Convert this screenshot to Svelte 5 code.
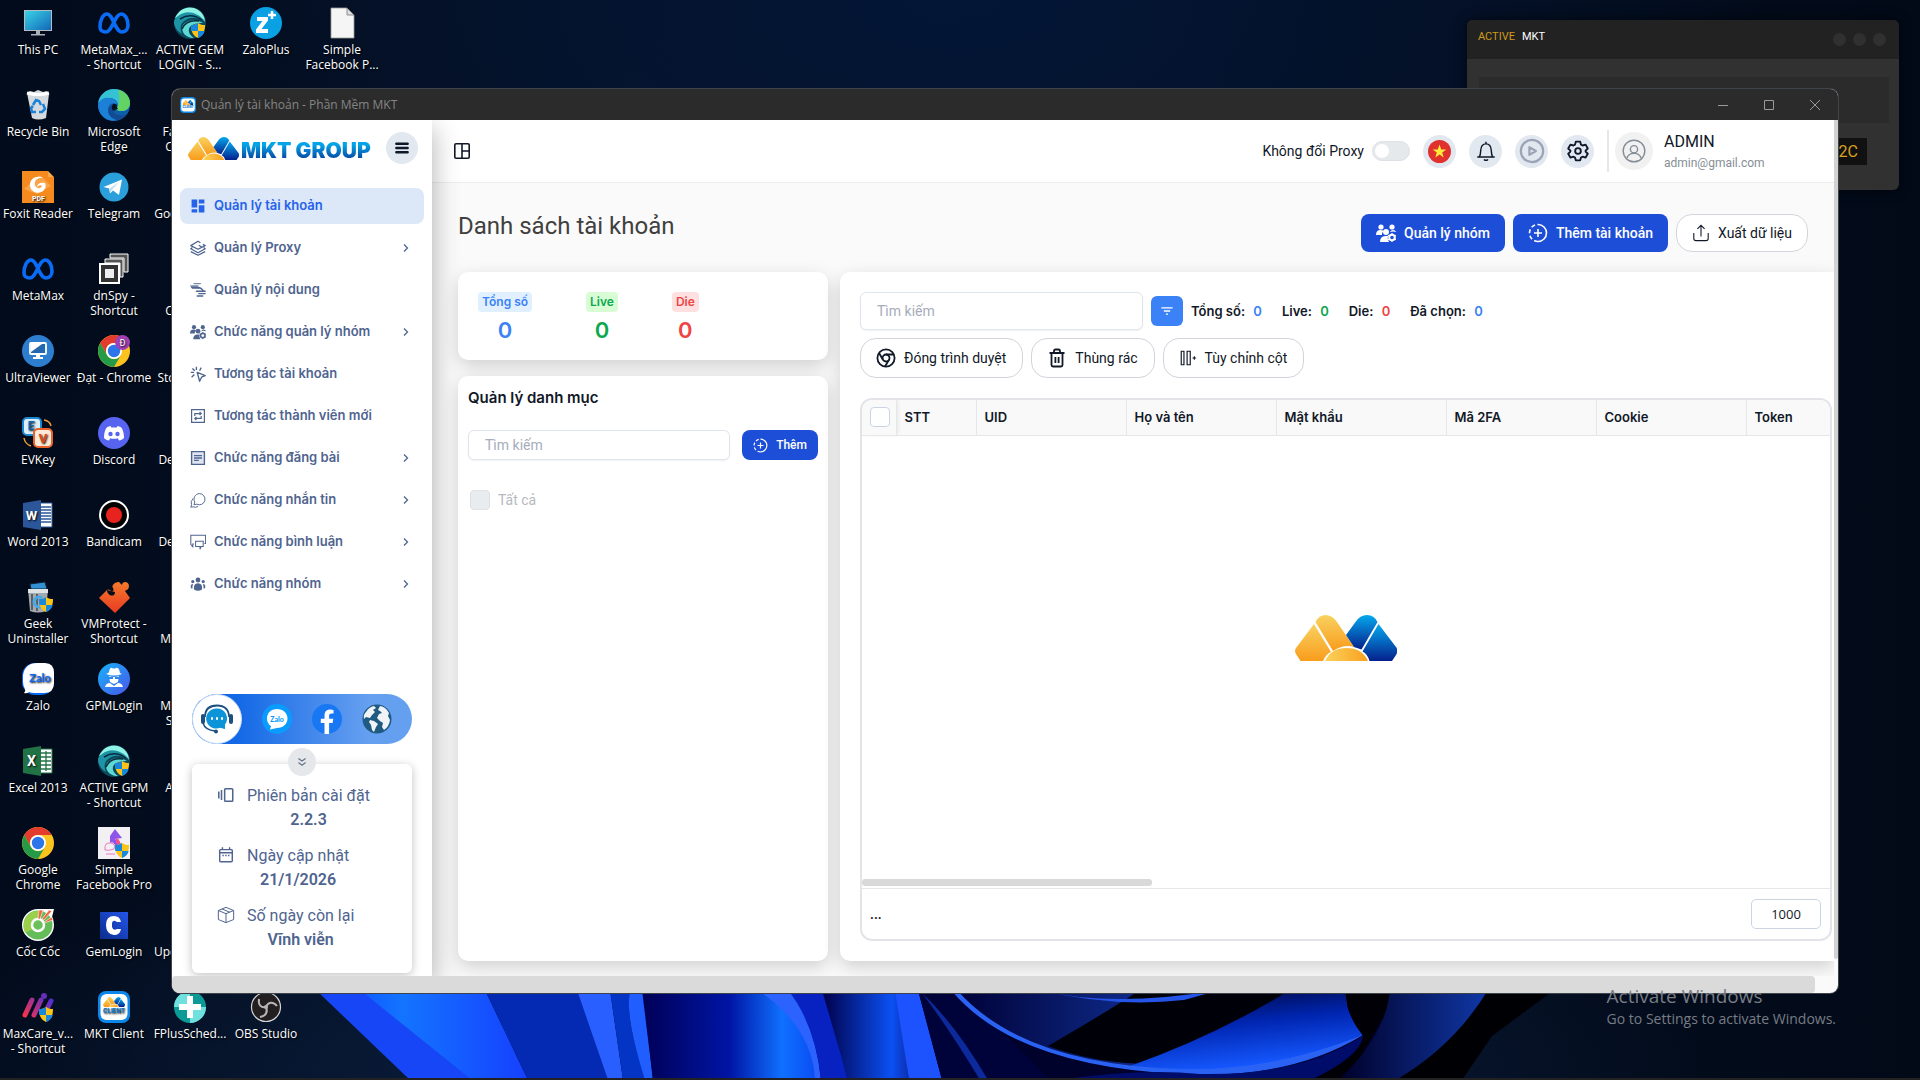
<script lang="ts">
  interface Shortcut {
    icon: string;
    lines: string[];
    tucked?: boolean;
  }

  interface MenuItem {
    icon: string;
    label: string;
    expandable?: boolean;
  }

  const shield =
    '<path d="M24 16c2.500 1.700 4.800 2 7 2 0 6-1.500 10.500-7 13-5.500-2.500-7-7-7-13 2.200 0 4.500-.3 7-2z" fill="#fdc316"/><path d="M24 16v8h-6.700c-.3-1.800-.3-3.900-.3-6 2.200 0 4.500-.3 7-2zM24 24h6.700c-.8 3.300-2.900 5.600-6.700 7z" fill="#1788dc"/>';

  const metaLoop =
    '<path d="M2 20C2 13 5 7 9 7c6 0 8 18 15 18 4 0 6-3 6-7 0-6-3-11-7-11-6 0-9 18-15 18-4 0-6-2-6-5z" fill="none" stroke="#0a6cf5" stroke-width="3.600"/>';

  const wave =
    '<circle cx="16" cy="16" r="16" fill="#0b4a5c"/><path d="M1 11C5 2 13-1 20 1c7 2 11 8 11 14C27 8 17 6 1 11z" fill="#8ff3e6"/><path d="M4 9C12 3 22 4 31 14c-9-5-17-4-22 1-3 3-3 8-1 12C3 24 0 19 0 15c0-2 1-4 4-6z" fill="#1f93a6"/><path d="M9 18c5-6 13-6 20-2-8 0-13 2-14 6s2 7 5 9c-8 0-14-6-11-13z" fill="#5fd8d4"/><path d="M6 12c8-5 15-4 22 1M8 22c3-7 9-9 17-8" fill="none" stroke="#052b3c" stroke-width="1.500"/>';

  const chrome =
    '<circle cx="16" cy="16" r="16" fill="#fcc31e"/><path d="M2.200 8A16 16 0 0 1 29.800 8H16a8 8 0 0 0-7 12z" fill="#e33b2e"/><path d="M2.200 8A16 16 0 0 0 16 32l7-12a8 8 0 0 1-14 0z" fill="#259b48"/><circle cx="16" cy="16" r="8" fill="#fff"/><circle cx="16" cy="16" r="6.200" fill="#2c76ea"/>';

  const desktopIcons: Record<string, string> = {
    none: '',
    pc: '<rect x="2" y="3" width="28" height="21" fill="#b5bcc2"/><rect x="3" y="4" width="26" height="19" fill="url(#g-screen)"/><path d="M14 24h4v3h5v1.500H9V27h5z" fill="#a9b0b6"/>',
    meta: metaLoop,
    gem: wave + shield,
    zaloplus:
      '<circle cx="16" cy="16" r="16" fill="#0aa0e4"/><path d="M7 10h11v3.500L11.500 22H18v4H6v-3.500L12.500 14H7z" fill="#fff"/><path d="M22 4v8M18 8h8" stroke="#fff" stroke-width="2.500"/>',
    file: '<path d="M5 1h16l7 7v23H5z" fill="#f5f5f5" stroke="#9a9a9a" stroke-width=".8"/><path d="M21 1v7h7z" fill="#dedede" stroke="#777" stroke-width=".8"/>',
    recycle:
      '<path d="M5 4l3-2 4 1 4-2 5 2 4-1 2 3-3 24q-8 3-14 0z" fill="#d4dade"/><path d="M5 4q11 3 22 0" fill="none" stroke="#fff" stroke-width="3"/><path d="M11 16l3-5 3 1 2 4M21 15l2 5-3 3h-3M14 23h-4l-1-4 2-2" fill="none" stroke="#1a83d8" stroke-width="2.500"/>',
    edge: '<circle cx="16" cy="16" r="16" fill="#0f5eaa"/><path d="M0 15C1 6 8 0 16 0c9 0 16 6 16 14 0 5-4 8-8 8-4 0-6-1-5-3 2-3 1-9-7-10C7 9 2 11 0 15z" fill="#34c2d4"/><path d="M20 1c7 1 12 7 12 13 0 5-4 8-8 8-4 0-6-1-5-3 3-5 3-12 1-18z" fill="#63d363"/><path d="M0 16c1-5 6-8 11-7 5 0 9 4 9 8-2-3-7-4-9 0-3 6 1 12 8 14C9 34 0 26 0 16z" fill="#1b80d6"/><path d="M16 17c-4 6 3 12 13 8-3 4-7 6-10 6-8-2-11-9-7-14 1-1 3-1 4 0z" fill="#124b93"/><path d="M15 15q-3 5 1 7 1-2 4-2-2-2-1-4-2-2-4-1z" fill="#041022"/>',
    foxit:
      '<path d="M0 0h26v6h6v26H0z" fill="#f58b1e"/><path d="M26 0l6 6h-6z" fill="#f7a94d"/><path d="M2 18L18 4l11 11-14 8z" fill="#fbb565" opacity=".6"/><path d="M22 7C13 3 7 9 8 15c1 7 10 9 14 4 2-2 2-5 1-7-5-1-8 1-8 4 2-2 4-2 5-1-1 3-6 3-7-1-1-5 3-8 9-7z" fill="#fff"/><text x="16.500" y="30" font-size="7" font-weight="700" fill="#fff" text-anchor="middle" font-family="Roboto">PDF</text>',
    telegram:
      '<circle cx="16" cy="16" r="14.500" fill="#2a9fdb"/><path d="M5.500 16L24 8.500 21 24l-6-4.500-3 3-.8-5z" fill="#fff"/><path d="M11.500 17.500L21 11l-7 8-2 3z" fill="#c3dff0"/>',
    dnspy:
      '<path d="M12 1h18v18h-4V5H12zM7 6h18v18h-3V10H7z" fill="#555" stroke="#fff"/><path d="M2 11h19v19H2z" fill="#333" stroke="#fff" stroke-width="2"/><rect x="7" y="16" width="9" height="9" fill="#eee"/>',
    ultra:
      '<circle cx="16" cy="16" r="16" fill="#2e7ecf"/><rect x="8" y="8" width="16" height="11" rx="1" fill="#2567ae" stroke="#fff" stroke-width="1.800"/><path d="M9 17L20 9H9z" fill="#fff"/><path d="M14 20h4v2h3v2H11v-2h3z" fill="#fff"/>',
    chromeuser:
      chrome +
      '<circle cx="24.500" cy="7.500" r="7.500" fill="#a13fb4"/><text x="24.500" y="11" font-size="9" fill="#fff" text-anchor="middle" font-family="Roboto">Đ</text>',
    evkey:
      '<rect x="1" y="1" width="18" height="17" rx="4" fill="#dceffc" stroke="#1c87cf" stroke-width="2"/><text x="9" y="13" font-size="12" font-weight="700" fill="#1266b0" text-anchor="middle" font-family="Roboto">E</text><rect x="12" y="12" width="18" height="18" rx="4" fill="#ffe9d8" stroke="#e9622a" stroke-width="2"/><text x="21" y="26" font-size="13" font-weight="700" fill="#dd4a17" text-anchor="middle" font-family="Roboto">V</text><path d="M22 3q6 1 7 6M2 21q1 6 7 8" fill="none" stroke="#f09b32" stroke-width="1.500"/>',
    discord:
      '<circle cx="16" cy="16" r="16" fill="#5764ef"/><path d="M12.500 9C10 9.300 8.500 10.500 8 11.500 6.500 14.500 6 17.500 6 21c1.500 1.700 3.300 2.300 5 2.500l1.200-2.200q3.800 1 7.600 0L21 23.500c1.700-.2 3.500-.8 5-2.500 0-3.500-.5-6.500-2-9.500-.5-1-2-2.200-4.500-2.500l-.8 1.500h-5.400z" fill="#fff"/><circle cx="12.500" cy="17" r="2.200" fill="#5764ef"/><circle cx="19.500" cy="17" r="2.200" fill="#5764ef"/>',
    word: '<path d="M15 4h15v24H15z" fill="#fff" stroke="#2b579a"/><path d="M19 8h10M19 11h10M19 14h10M19 17h10M19 20h10M19 23h10" stroke="#2b579a" stroke-width="1.300"/><path d="M1 4l18-3v30L1 28z" fill="#2b579a"/><text x="9.500" y="21" font-size="13" font-weight="700" fill="#fff" text-anchor="middle" font-family="Roboto">W</text>',
    bandicam:
      '<circle cx="16" cy="16" r="14" fill="#000" stroke="#fff" stroke-width="2"/><circle cx="16" cy="16" r="8" fill="#e8221f"/>',
    geek: '<path d="M8 3l15-2 2 7H9z" fill="#3191d4" stroke="#123"/><path d="M6 8h20l-2 22q-8 3-16 0z" fill="#a4a9ad"/><path d="M6 8h20v4H6z" fill="#dfe2e4"/><path d="M10 13v16M15 13v17" stroke="#5d6165" stroke-width="2"/><path d="M20 17a5 5 0 1 0 0 8" fill="none" stroke="#48a9e8" stroke-width="3"/>' +
      shield,
    vmprotect:
      '<path d="M1 17l8-8c2-2 4 2 6 1 2-2-2-4 0-6 2-3 5-3 6-3l3 3c0-4 7-4 7 1 0 4-3 4-4 5l5 7-15 15z" fill="url(#g-puzzle)"/><path d="M9 9c0 6 8 8 8 2" fill="#040d1d"/>',
    zalo: '<rect width="32" height="32" rx="13" fill="#0868f5"/><path d="M15 0h8q9 0 9 10v10q0 10-10 10h-9q-4 0-6-1-2 2-5 1 2-2 1-4-2-3-2-7V12Q3 0 15 0z" fill="#fff"/><text x="18" y="19" font-size="11" font-weight="700" fill="#0868f5" text-anchor="middle" font-family="Lato">Zalo</text>',
    gpm: '<circle cx="16" cy="16" r="16" fill="url(#g-gpm)"/><path d="M8 11q3-1 3-2 1-5 3-4 2 1 4 0 3-1 4 5l2 1q-8 3-16 0zM11 13q5 2 10 0l-1 6-4 2-4-2zM7 24q1-4 5-4l4 3 4-3q4 0 5 4z" fill="#fff"/><path d="M11 14h4v2h-4zM17 14h4v2h-4z" fill="#2688f0"/>',
    excel:
      '<path d="M15 4h15v24H15z" fill="#fff" stroke="#217346"/><path d="M19 8h10M19 12h10M19 16h10M19 20h10M19 24h10M24 6v20" stroke="#217346" stroke-width="1.300"/><path d="M1 4l18-3v30L1 28z" fill="#217346"/><text x="9.500" y="21" font-size="14" font-weight="700" fill="#fff" text-anchor="middle" font-family="Roboto">X</text>',
    chrome,
    simple:
      '<rect width="32" height="32" fill="#f3f0f4"/><path d="M17 2l-5 7v7q3-2 4 1l6 4q1-6-5-9l7-1z" fill="#8f55e8"/><path d="M18 11q5 2 5 9l-5-4z" fill="#f2508d"/><path d="M7 23q-1-8 6-7 5 1 3 6-5 2-9 1zM8 27h9" fill="none" stroke="#ed79bf"/>' +
      shield,
    coccoc:
      '<path d="M16 0h16l-2 8q2 4 2 8a16 16 0 1 1-16-16z" fill="#fff"/><circle cx="16" cy="16" r="14.500" fill="#65bd59"/><path d="M3 10Q8 1 16 2v10l-5 8-8 4q-3-8 0-14z" fill="#9bd04c"/><circle cx="16" cy="16" r="6" fill="#6cc05c" stroke="#fff" stroke-width="2.500"/><path d="M17 1l-1 9h2l3-9zM27 1l-7 9 2 1 8-9zM30 8l-8 5v1l9-3z" fill="#f5613d" stroke="#fff" stroke-width=".6"/>',
    gemlogin:
      '<path d="M2 3h28v27H2z" fill="url(#g-gem)"/><path d="M23 13h-4q-4-3-5 1v4q1 4 5 2h4q-1 6-7 6-8-1-8-10 0-9 8-9 6 0 7 6z" fill="#fff"/>',
    maxcare:
      '<path d="M3 24L10 9M12 24l7-15M22 24l7-14" stroke="url(#g-max)" stroke-width="5" stroke-linecap="round"/><circle cx="22" cy="5" r="3" fill="#6230b8"/>' +
      shield,
    mktclient:
      '<rect width="32" height="32" rx="8" fill="#0d86ea"/><rect x="2.500" y="3" width="27" height="26" rx="6" fill="#fff"/><svg x="5" y="6" width="22" height="10" viewBox="0 0 102 46"><use href="#mkt-mark"/></svg><text x="16" y="22" font-size="6" font-weight="800" fill="#0874c7" text-anchor="middle" font-family="Inter">CLIENT</text>',
    fplus:
      '<circle cx="16" cy="16" r="16" fill="#0c9a97"/><path d="M16 0A16 16 0 0 0 0 16h16zM32 16a16 16 0 0 1-16 16V16z" fill="#6fe0dd"/><path d="M13 5h6v8h8v6h-8v8h-6v-8H5v-6h8z" fill="#fff"/>',
    obs: '<circle cx="16" cy="16" r="14.500" fill="#231f20" stroke="#d5d5d5" stroke-width="1.200"/><path d="M16 16c-5 1-8-2-7-8M16 16c2-5 7-6 11-1M16 16c2 5 0 9-6 10" fill="none" stroke="#b9b5b5" stroke-width="2"/><circle cx="16" cy="16" r="2" fill="#b9b5b5"/>',
    red: '<circle cx="16" cy="16" r="16" fill="#c8454b"/>',
  };

  const columns: Shortcut[][] = [
    [
      { icon: 'pc', lines: ['This PC'] },
      { icon: 'recycle', lines: ['Recycle Bin'] },
      { icon: 'foxit', lines: ['Foxit Reader'] },
      { icon: 'meta', lines: ['MetaMax'] },
      { icon: 'ultra', lines: ['UltraViewer'] },
      { icon: 'evkey', lines: ['EVKey'] },
      { icon: 'word', lines: ['Word 2013'] },
      { icon: 'geek', lines: ['Geek', 'Uninstaller'] },
      { icon: 'zalo', lines: ['Zalo'] },
      { icon: 'excel', lines: ['Excel 2013'] },
      { icon: 'chrome', lines: ['Google', 'Chrome'] },
      { icon: 'coccoc', lines: ['Cốc Cốc'] },
      { icon: 'maxcare', lines: ['MaxCare_v...', '- Shortcut'] },
    ],
    [
      { icon: 'meta', lines: ['MetaMax_...', '- Shortcut'] },
      { icon: 'edge', lines: ['Microsoft', 'Edge'] },
      { icon: 'telegram', lines: ['Telegram'] },
      { icon: 'dnspy', lines: ['dnSpy -', 'Shortcut'] },
      { icon: 'chromeuser', lines: ['Đạt - Chrome'] },
      { icon: 'discord', lines: ['Discord'] },
      { icon: 'bandicam', lines: ['Bandicam'] },
      { icon: 'vmprotect', lines: ['VMProtect -', 'Shortcut'] },
      { icon: 'gpm', lines: ['GPMLogin'] },
      { icon: 'gem', lines: ['ACTIVE GPM', '- Shortcut'] },
      { icon: 'simple', lines: ['Simple', 'Facebook Pro'] },
      { icon: 'gemlogin', lines: ['GemLogin'] },
      { icon: 'mktclient', lines: ['MKT Client'] },
    ],
    [
      { icon: 'gem', lines: ['ACTIVE GEM', 'LOGIN - S...'] },
      tucked('Fa', 'C'),
      tucked('Goog'),
      tucked('', 'C'),
      tucked('Stor'),
      tucked('Des'),
      tucked('Des'),
      tucked('', 'Ma'),
      tucked('Ma', 'S'),
      tucked('A'),
      tucked(),
      tucked('Upda'),
      { icon: 'fplus', lines: ['FPlusSched...'] },
    ],
    [{ icon: 'zaloplus', lines: ['ZaloPlus'] }, ...blanks(11), { icon: 'obs', lines: ['OBS Studio'] }],
    [{ icon: 'file', lines: ['Simple', 'Facebook P...'] }, { icon: 'red', lines: [] }],
  ];

  // shortcuts half hidden under the app window
  function tucked(...lines: string[]): Shortcut {
    return { icon: 'none', lines, tucked: true };
  }

  function blanks(count: number): Shortcut[] {
    return Array.from({ length: count }, () => ({ icon: 'none', lines: [] }));
  }

  const people =
    '<circle cx="5" cy="4" r="2.600"/><circle cx="16" cy="4" r="2.600"/><path d="M0 12q0-5 4.500-5 2 0 3 1-2 2-1.500 4zM14 9q1-2 3-2 2.500 0 3 2-3-1-6 0z"/><circle cx="10" cy="9" r="3"/><path d="M4 19q0-6 5.500-6H12q-1 3 1 6z"/><circle cx="16" cy="14.500" r="2.800" fill="none" stroke="currentColor" stroke-width="2"/><path d="M16 10v9M11.900 12.200l8.200 4.600M11.900 16.800l8.200-4.600" stroke="currentColor" stroke-width="1.200" stroke-dasharray="1.600 5.900"/>';

  const icons: Record<string, string> = {
    dashboard: '<path d="M2 2h7v10H2zM11 2h7v5h-7zM2 14h7v4H2zM11 9h7v9h-7z"/>',
    layers:
      '<g fill="none" stroke="currentColor" stroke-width="1.600" stroke-linejoin="round"><path d="M13 3.500l-3-2L1 7l9 4.500 5-2.500-4-2.500M10 11.500L19 7l-3-1.500"/><path d="M3 9.500l-2 1.500 9 5 9-5-2-1.500M1 14.500l9 4.500 9-4.500"/></g>',
    strokes:
      '<path d="M5 2h8M1 5h9M3 8h8" stroke="currentColor" stroke-width="1.700" stroke-linecap="round" opacity=".75"/><path d="M2 6.500h6q6 0 9 5M8 11.500h11M11 14.500h8M9 17.500h7" fill="none" stroke="currentColor" stroke-width="1.700" stroke-linecap="round"/>',
    people,
    click:
      '<g fill="none" stroke="currentColor" stroke-width="1.700" stroke-linejoin="round"><path d="M9 8l10 4-4.500 2L12 19z"/><path d="M8 1v4M1 8h4M3 3l3 3M14 2l-2 4M2 14l3.500-3.500"/></g>',
    retweet:
      '<g fill="none" stroke="currentColor" stroke-width="1.500"><path d="M2 2h16v16H2z"/><path d="M6 10V7h8M12 5l2 2-2 2M14 10v3H6M8 11l-2 2 2 2"/></g>',
    post: '<path d="M2 2h16v16H2z" fill="#dfe4f0" stroke="currentColor" stroke-width="1.700"/><path d="M5 7h10M5 10h10M5 13h6" stroke="currentColor" stroke-width="1.700"/>',
    chat: '<g fill="none" stroke="currentColor" stroke-width="1.200"><path d="M11.500 2a7 7 0 1 1-3 13.200L5 16l1-3.500A7 7 0 0 1 11.500 2z"/><path d="M4 8q-4 4-2 8l-1 3 3-.5q3 1.500 6-.5"/></g>',
    comments:
      '<g fill="none" stroke="currentColor" stroke-width="1.300"><path d="M5 12.500H3.500V16L1 13V1.500h18.500V12H18"/><path d="M7 9h9.500v6.500H14L12.500 19v-3.500H7z"/></g>',
    group:
      '<circle cx="10" cy="5" r="3"/><circle cx="3.500" cy="7" r="2"/><circle cx="16.500" cy="7" r="2"/><path d="M5 17q-1-8 5-8t5 8q-5 3-10 0zM1 15v-3q0-2 3-2-1.500 3-1 6zM19 15v-3q0-2-3-2 1.500 3 1 6z"/>',
    chevron:
      '<path d="M6 3l7 7-7 7" fill="none" stroke="currentColor" stroke-width="2.600"/>',
    menu: '<path d="M2 4h16M2 10h16M2 16h16" stroke="currentColor" stroke-width="3.600" stroke-linecap="round"/>',
    panel:
      '<g fill="none" stroke="currentColor" stroke-width="2"><rect x="1" y="1" width="18" height="18" rx="1.500"/><path d="M10 1v18M10 10h9"/></g>',
    bell: '<path d="M2.500 15.500h15M4 15.500c1-2 1-3 1.200-6C5.400 6 7 3.500 10 3.500s4.600 2.500 4.800 6c.2 3 .2 4 1.200 6M10 3.500V2M8.500 18q1.500 1 3 0" fill="none" stroke="currentColor" stroke-width="1.300" stroke-linecap="round"/>',
    play: '<g fill="none" stroke="currentColor" stroke-width="1.700" stroke-linejoin="round"><circle cx="10" cy="10" r="8.600"/><path d="M8 7l5 3-5 3z"/></g>',
    gear: '<g fill="none" stroke="currentColor" stroke-width="1.700"><path d="M8 1.500h4l.7 2.700 1.500.8 2.700-.8 2 3.500-2 2v.8l2 2-2 3.500-2.700-.8-1.500.8-.7 2.500H8l-.7-2.500-1.500-.8-2.700.8-2-3.500 2-2v-.8l-2-2 2-3.500 2.700.8 1.500-.8z" stroke-linejoin="round"/><circle cx="10" cy="10" r="2.600"/></g>',
    user: '<g fill="none" stroke="currentColor" stroke-width="1.200"><circle cx="10" cy="10" r="9"/><circle cx="10" cy="8.500" r="3"/><path d="M4 16q1.500-4 6-4t6 4"/></g>',
    plus: '<path d="M10 6v8M6 10h8" stroke="currentColor" stroke-width="1.600"/><path d="M10 1.500a8.500 8.500 0 0 1 0 17" fill="none" stroke="currentColor" stroke-width="1.600"/><path d="M10 18.500a8.500 8.500 0 0 1 0-17" fill="none" stroke="currentColor" stroke-width="1.600" stroke-dasharray="4 2.500"/>',
    upload:
      '<path d="M2 10v6q0 2.500 2.500 2.500h11Q18 18.500 18 16v-6M10 14V2M6 5.500L10 1.500l4 4" fill="none" stroke="currentColor" stroke-width="1.200"/>',
    filter:
      '<path d="M2 5.500h16M5.500 10h9M8.500 14.500h3" stroke="currentColor" stroke-width="1.800"/>',
    browser:
      '<g fill="none" stroke="currentColor" stroke-width="1.800"><circle cx="10" cy="10" r="8.600"/><circle cx="10" cy="10" r="3.500"/><path d="M10 6.500h8M7 11.800L3 5M13 11.800L9 18.500"/></g>',
    trash:
      '<g fill="none" stroke="currentColor" stroke-width="1.800"><path d="M2.500 5h15M4.500 5v12q0 1.500 1.500 1.500h8q1.500 0 1.500-1.500V5M7 5V3q0-1.500 1.500-1.500h3Q13 1.500 13 3v2M8.400 9v6M11.600 9v6"/></g>',
    columns:
      '<path d="M2.500 2.500h3v15h-3zM9 2.500h3.500v15H9z" fill="none" stroke="currentColor" stroke-width="1.300"/><path d="M17 8v4M15 10h4" stroke="currentColor" stroke-width="1.300"/>',
    version:
      '<path d="M2 6v8M5 4.500v11" stroke="currentColor" stroke-width="1.700"/><rect x="8.500" y="3" width="9" height="14" rx="1" fill="none" stroke="currentColor" stroke-width="1.700"/>',
    calendar:
      '<g fill="none" stroke="currentColor" stroke-width="1.600"><rect x="3" y="4" width="14" height="13.500" rx="1"/><path d="M3 7.500h14M6 1.500V4M14 1.500V4"/><path d="M6 10.500h8" stroke-dasharray="1.600 1.500"/></g>',
    box: '<path d="M1.500 5L10 1.500 18.500 5v10L10 18.500 1.500 15zM1.500 5L10 8.500 18.500 5M10 8.500v10M5.500 3.300L14 6.800" fill="none" stroke="currentColor" stroke-width="1.100"/>',
    collapse:
      '<path d="M4 4l6 4.500L16 4M4 11l6 4.500 6-4.500" fill="none" stroke="currentColor" stroke-width="2"/>',
  };

  const menu: MenuItem[] = [
    { icon: 'dashboard', label: 'Quản lý tài khoản' },
    { icon: 'layers', label: 'Quản lý Proxy', expandable: true },
    { icon: 'strokes', label: 'Quản lý nội dung' },
    { icon: 'people', label: 'Chức năng quản lý nhóm', expandable: true },
    { icon: 'click', label: 'Tương tác tài khoản' },
    { icon: 'retweet', label: 'Tương tác thành viên mới' },
    { icon: 'post', label: 'Chức năng đăng bài', expandable: true },
    { icon: 'chat', label: 'Chức năng nhắn tin', expandable: true },
    { icon: 'comments', label: 'Chức năng bình luận', expandable: true },
    { icon: 'group', label: 'Chức năng nhóm', expandable: true },
  ];

  const info = [
    { icon: 'version', label: 'Phiên bản cài đặt', value: '2.2.3' },
    { icon: 'calendar', label: 'Ngày cập nhật', value: '21/1/2026' },
    { icon: 'box', label: 'Số ngày còn lại', value: 'Vĩnh viễn' },
  ];

  const stats = [
    { label: 'Tổng số', value: 0, tone: 'blue' },
    { label: 'Live', value: 0, tone: 'green' },
    { label: 'Die', value: 0, tone: 'red' },
  ];

  const counters = [...stats, { label: 'Đã chọn', value: 0, tone: 'blue' }];

  const headers = [
    { label: 'STT', width: 80 },
    { label: 'UID', width: 150 },
    { label: 'Họ và tên', width: 150 },
    { label: 'Mật khẩu', width: 170 },
    { label: 'Mã 2FA', width: 150 },
    { label: 'Cookie', width: 150 },
    { label: 'Token', width: 86 },
  ];

  let active = $state('Quản lý tài khoản');
  let categoryQuery = $state('');
  let accountQuery = $state('');
  let pageSize = $state('1000');
</script>

{#snippet icon(name: string, size: number)}
  <svg class="icon" width={size} height={size} viewBox="0 0 20 20" fill="currentColor" aria-hidden="true">
    {@html icons[name]}
  </svg>
{/snippet}

{#snippet mark(width: number, height: number)}
  <svg class="icon" {width} {height} viewBox="0 0 102 46" aria-hidden="true"><use href="#mkt-mark" /></svg>
{/snippet}

<svg class="defs" width="0" height="0" aria-hidden="true">
  <defs>
    <linearGradient id="g-screen" x1="0" y1="0" x2="1" y2="1"><stop stop-color="#39d3e6" /><stop offset="1" stop-color="#1267b8" /></linearGradient>
    <linearGradient id="g-puzzle" x1="0" y1="0" x2="0" y2="1"><stop stop-color="#f47a2c" /><stop offset="1" stop-color="#ea3a22" /></linearGradient>
    <linearGradient id="g-gpm" x1="0" y1="0" x2="1" y2="1"><stop stop-color="#16b4fb" /><stop offset="1" stop-color="#4a55e8" /></linearGradient>
    <linearGradient id="g-gem" x1="0" y1="1" x2="1" y2="0"><stop stop-color="#0b2d8e" /><stop offset="1" stop-color="#2456ea" /></linearGradient>
    <linearGradient id="g-max" gradientUnits="userSpaceOnUse" x1="2" y1="26" x2="28" y2="6"><stop stop-color="#ff3347" /><stop offset="1" stop-color="#4b2fd6" /></linearGradient>
    <linearGradient id="g-gold" x1="0" y1="0" x2="0" y2="1"><stop stop-color="#f8d260" /><stop offset="1" stop-color="#f99c1c" /></linearGradient>
    <linearGradient id="g-sun" x1="0" y1="0" x2="1" y2="0"><stop stop-color="#fbd25c" /><stop offset="1" stop-color="#f9a01f" /></linearGradient>
    <linearGradient id="g-blue" x1="0" y1="0" x2="0" y2="1"><stop stop-color="#04a9ee" /><stop offset="1" stop-color="#05208c" /></linearGradient>
    <g id="mkt-mark">
      <path d="M19 9L1 33q-2 3 0 6l4.500 7H28q3-7 8-9z" fill="url(#g-gold)" />
      <path d="M20.500 7Q24 0 30.500 0T42 7l17 25q-10-3-21 4z" fill="url(#g-gold)" />
      <path d="M51 20l9.500-13Q65 0 72 0t10.500 7L66.500 34.500 59 32z" fill="url(#g-blue)" />
      <path d="M83.500 9L101 32q3 4 0 8l-4 6H74.500q-2-7-7-9.500z" fill="url(#g-blue)" />
      <path d="M30 46q6-13 21.500-13T73 46z" fill="url(#g-sun)" />
    </g>
  </defs>
</svg>

<main class="desktop">
  <svg class="wallpaper" viewBox="0 0 1920 1080" preserveAspectRatio="none" aria-hidden="true">
    <defs>
      <linearGradient id="w1" x1="0" x2="1"><stop stop-color="#0b3fff" /><stop offset=".4" stop-color="#1374ff" /><stop offset="1" stop-color="#1640ff" /></linearGradient>
      <linearGradient id="w2" x1="0" x2="1"><stop stop-color="#000055" /><stop offset=".5" stop-color="#0015a5" /><stop offset=".8" stop-color="#0f70ff" /><stop offset="1" stop-color="#0a4cf2" /></linearGradient>
      <linearGradient id="w3" x1="0" x2="1"><stop stop-color="#000048" /><stop offset=".8" stop-color="#0b50f4" /><stop offset="1" stop-color="#0c2fb0" /></linearGradient>
      <linearGradient id="w4" x1="0" x2="1"><stop stop-color="#000238" /><stop offset=".55" stop-color="#12339c" /><stop offset="1" stop-color="#0a1f78" /></linearGradient>
      <linearGradient id="w5" x1="0" y1="0" x2=".3" y2="1"><stop stop-color="#000430" /><stop offset=".5" stop-color="#0025b0" /><stop offset="1" stop-color="#1558ff" /></linearGradient>
      <linearGradient id="w6" x1="0" x2="1"><stop stop-color="#000028" /><stop offset="1" stop-color="#1038a8" /></linearGradient>
    </defs>
    <path d="M485 990h1000l-87 90H528z" fill="#00022c" />
    <path d="M318 990h167l43 90H412z" fill="url(#w1)" />
    <path d="M316 990h44l112 90h-62z" fill="#1646f5" />
    <path d="M485 990h93l30 90h-80z" fill="#0429b2" />
    <path d="M577 990h33l13 90h-15z" fill="#2a5fff" />
    <path d="M610 990h22q-10 20 14 90h-23z" fill="#0434c4" />
    <path d="M631 990h12l10 90h-8q-22-70-14-90z" fill="#215eff" />
    <path d="M642 990h118q54 36 57 90H653z" fill="url(#w2)" />
    <path d="M758 990h32q26 36 31 90h-6q-2-52-57-90z" fill="#2c63ff" />
    <path d="M788 990h36l24 90h-27q-6-56-33-90z" fill="#0722c0" />
    <path d="M822 990h75l12 90h-61z" fill="url(#w3)" />
    <path d="M895 990h23l24 90h-33z" fill="#1d52ff" />
    <path d="M918 990h42l90 90H942z" fill="#00023a" />
    <path d="M922 993q34 32 66 87h-8q-30-50-58-87z" fill="#0d2a9c" />
    <path d="M957 990h393q-10 30 13 45-80 36-180 34-160-4-226-79z" fill="url(#w4)" />
    <path d="M1048 1046Q1110 1010 1140 990h190l-70 60q-120 30-212-4z" fill="#000008" />
    <path d="M1130 1066Q1215 1036 1290 990h55q0 24 18 45-60 30-120 35-60 4-113-4z" fill="url(#w5)" />
    <path d="M957 990q66 75 226 79 90 2 180-34-74 45-183 39-166-8-229-84z" fill="#2a62f4" />
    <path d="M1040 990q70 18 180 0l-36 10q-70 8-144-10z" fill="#2454e8" />
    <path d="M1060 1080q80-12 140-6 100 2 163-38 2 22-15 44z" fill="#000c6a" />
    <path d="M1345 990h54l-52 90h-36q50-24 52-44-16-20-18-46z" fill="#000006" />
    <path d="M1390 990h100q-36 56-92 90h-60q48-44 52-90z" fill="url(#w6)" />
    <path d="M1488 990h66l-62 46-30 44h-66q58-34 92-90z" fill="#000004" />
  </svg>

  <nav class="shortcuts" aria-label="Desktop">
    {#each columns as column}
      <div class="shortcut-column">
        {#each column as item}
          <div class="shortcut" class:tucked={item.tucked}>
            <svg width="32" height="32" viewBox="0 0 32 32" aria-hidden="true">{@html desktopIcons[item.icon]}</svg>
            {#each item.lines as line}
              <span>{line}</span>
            {/each}
          </div>
        {/each}
      </div>
    {/each}
  </nav>

  <section class="activator">
    <header>
      <strong>ACTIVE</strong>
      <span>MKT</span>
      <i></i><i></i><i></i>
    </header>
    <div class="activator-panel"></div>
    <div class="activator-code">2C</div>
  </section>

  <section class="app-window">
    <header class="titlebar">
      <svg width="16" height="16" viewBox="0 0 32 32" aria-hidden="true">{@html desktopIcons.mktclient}</svg>
      <span class="titlebar-text">Quản lý tài khoản - Phần Mềm MKT</span>
      <button aria-label="Minimize"><svg width="10" height="10"><path d="M0 5.500h10" /></svg></button>
      <button aria-label="Maximize"><svg width="10" height="10"><path d="M.5.5h9v9h-9z" /></svg></button>
      <button aria-label="Close"><svg width="10" height="10"><path d="M0 0l10 10M10 0L0 10" /></svg></button>
    </header>

    <div class="app-body">
      <aside class="sidebar">
        <div class="brand">
          {@render mark(51, 23)}
          <span class="brand-name">MKT GROUP</span>
          <button class="round burger" aria-label="Menu">{@render icon('menu', 14)}</button>
        </div>

        <nav class="menu">
          {#each menu as item}
            <button class="menu-item" class:active={item.label === active} onclick={() => (active = item.label)}>
              {@render icon(item.icon, 16)}
              <span>{item.label}</span>
              {#if item.expandable}
                {@render icon('chevron', 10)}
              {/if}
            </button>
          {/each}
        </nav>

        <div class="sidebar-foot">
          <div class="social">
            <a class="support" href="#support" aria-label="Hỗ trợ">
              <svg width="34" height="30" viewBox="0 0 34 30">
                <path d="M5 13C5 5 10 1.500 17 1.500S29 5 29 13" fill="none" stroke="#1d4f80" stroke-width="1.800" />
                <rect x="1" y="10" width="4" height="10" rx="2" fill="#1d4f80" /><rect x="29" y="10" width="4" height="10" rx="2" fill="#1d4f80" />
                <path d="M3 19q2 7 12 8" fill="none" stroke="#1d4f80" stroke-width="1.500" /><circle cx="16" cy="27.500" r="2" fill="#1d4f80" />
                <path d="M17 4.500a10 10 0 0 1 8 16V25l-5-1.300A10 10 0 1 1 17 4.500z" fill="#0c93d8" />
                <path d="M11 14.500h2M16 14.500h2M21 14.500h2" stroke="#fff" stroke-width="2.500" />
              </svg>
            </a>
            <a href="#zalo" aria-label="Zalo">
              <svg width="30" height="30" viewBox="0 0 30 30">
                <circle cx="15" cy="15" r="15" fill="#0a9bff" />
                <path d="M15 5c6 0 10.500 4 10.500 9.500S21 24 15 24l-7 1.500 1-3.200C6.500 20.500 5 18 5 14.500 5 9 9 5 15 5z" fill="#fff" />
                <text x="15" y="18" font-size="7" font-weight="900" fill="#0a9bff" text-anchor="middle" font-family="Lato">Zalo</text>
              </svg>
            </a>
            <a href="#facebook" aria-label="Facebook">
              <svg width="30" height="30" viewBox="0 0 30 30">
                <circle cx="15" cy="15" r="15" fill="#1877f2" />
                <path d="M12.500 30V19H8.800v-4.300h3.700v-3.200c0-3.800 2.200-5.900 5.700-5.900 1.200 0 2.400.2 3.300.4v3.600h-2c-2 0-2.400 1.200-2.400 2.400v2.700h4.200l-.7 4.300h-3.500v11z" fill="#fff" />
              </svg>
            </a>
            <a href="#website" aria-label="Website">
              <svg width="30" height="30" viewBox="0 0 30 30">
                <circle cx="15" cy="15" r="14.500" fill="#1f5a82" />
                <path d="M4 8q3-5 8-6l2 2-3 2 2 2-3 3-2 3-4-1-2 2q-1-4 2-7zM8 16l4 1 4 3-2 3-2 5-2-2-1-5-2-3zM18 2q6 1 9 7l-1 3 2 4q-1 7-6 10l-2-3 1-4-3-2-3-3 2-4 3-1-2-2-2-1z" fill="#f0f4f6" />
              </svg>
            </a>
          </div>

          <div class="info-card">
            <button class="round collapse" aria-label="Thu gọn">{@render icon('collapse', 12)}</button>
            {#each info as row}
              <div class="info-row">
                {@render icon(row.icon, 18)}
                <div>
                  <span>{row.label}</span>
                  <b>{row.value}</b>
                </div>
              </div>
            {/each}
          </div>
        </div>
      </aside>

      <div class="content">
        <header class="topbar">
          <button class="plain" aria-label="Bố cục">{@render icon('panel', 16)}</button>
          <label class="proxy">
            Không đổi Proxy
            <input type="checkbox" />
          </label>
          <button class="round" aria-label="Ngôn ngữ">
            <svg width="23" height="23" viewBox="0 0 23 23">
              <circle cx="11.500" cy="11.500" r="11.500" fill="#e0312e" />
              <path d="M11.500 4.500l1.700 4.900h5.100l-4.100 3.100 1.500 5-4.200-3-4.200 3 1.500-5-4.100-3.100h5.100z" fill="#ffeb3b" />
            </svg>
          </button>
          <button class="round" aria-label="Thông báo">{@render icon('bell', 22)}</button>
          <button class="round dim" aria-label="Hướng dẫn">{@render icon('play', 26)}</button>
          <button class="round" aria-label="Cài đặt">{@render icon('gear', 22)}</button>
          <div class="profile">
            <span class="avatar">{@render icon('user', 24)}</span>
            <div>
              <p>ADMIN</p>
              <small>admin@gmail.com</small>
            </div>
          </div>
        </header>

        <div class="page">
          <div class="page-head">
            <h1>Danh sách tài khoản</h1>
            <button class="btn primary">{@render icon('people', 20)}Quản lý nhóm</button>
            <button class="btn primary">{@render icon('plus', 20)}Thêm tài khoản</button>
            <button class="btn outline">{@render icon('upload', 18)}Xuất dữ liệu</button>
          </div>

          <div class="panels">
            <div class="left">
              <div class="card stats">
                {#each stats as stat}
                  <div class="stat {stat.tone}">
                    <span>{stat.label}</span>
                    <b>{stat.value}</b>
                  </div>
                {/each}
              </div>

              <div class="card category">
                <h2>Quản lý danh mục</h2>
                <div class="category-form">
                  <input type="text" aria-label="Tìm kiếm danh mục" placeholder="Tìm kiếm" bind:value={categoryQuery} />
                  <button class="btn primary small">{@render icon('plus', 15)}Thêm</button>
                </div>
                <label class="all">
                  <input type="checkbox" disabled />
                  Tất cả
                </label>
              </div>
            </div>

            <div class="card accounts">
              <div class="toolbar">
                <input type="text" aria-label="Tìm kiếm tài khoản" placeholder="Tìm kiếm" bind:value={accountQuery} />
                <button class="filter" aria-label="Bộ lọc">{@render icon('filter', 14)}</button>
                <div class="counters">
                  {#each counters as counter}
                    <span>{counter.label}: <b class={counter.tone}>{counter.value}</b></span>
                  {/each}
                </div>
              </div>
              <div class="actions">
                <button class="btn outline">{@render icon('browser', 20)}Đóng trình duyệt</button>
                <button class="btn outline">{@render icon('trash', 20)}Thùng rác</button>
                <button class="btn outline">{@render icon('columns', 18)}Tùy chỉnh cột</button>
              </div>

              <div class="table-box">
                <table>
                  <thead>
                    <tr>
                      <th class="check"><input type="checkbox" aria-label="Chọn tất cả" /></th>
                      {#each headers as header}
                        <th style="width: {header.width}px">{header.label}</th>
                      {/each}
                    </tr>
                  </thead>
                </table>
                <div class="empty">{@render mark(102, 46)}</div>
                <div class="table-scroll"></div>
                <footer>
                  <span>...</span>
                  <input type="text" aria-label="Số dòng" bind:value={pageSize} />
                </footer>
              </div>
            </div>
          </div>
        </div>
      </div>
      <div class="scroll-y"></div>
    </div>
    <div class="scroll-x"></div>
  </section>

  <div class="watermark">
    <p>Activate Windows</p>
    <span>Go to Settings to activate Windows.</span>
  </div>
  <div class="taskbar"></div>
</main>

<style>
  :global(body) {
    background: #020a19;
  }

  * {
    box-sizing: border-box;
  }

  button,
  input {
    font: inherit;
    color: inherit;
  }

  button {
    padding: 0;
    border: 0;
    background: none;
    cursor: pointer;
  }

  h1,
  h2,
  p {
    margin: 0;
  }

  .defs {
    position: absolute;
  }

  .icon {
    flex: none;
    display: block;
  }

  .desktop {
    position: relative;
    min-height: 100vh;
    overflow: hidden;
    background:
      radial-gradient(ellipse 800px 400px at 50% 0, #031636, transparent),
      radial-gradient(ellipse 900px 260px at 42% 100%, #0c2245, transparent),
      linear-gradient(90deg, #020b1b, #061228 40%, #020a18);
    font-family: Roboto, 'Liberation Sans', sans-serif;
    font-size: 14px;
    color: #111827;
  }

  .wallpaper {
    position: absolute;
    inset: 0;
    width: 100%;
    height: 100%;
  }

  /* desktop shortcuts */
  .shortcuts {
    position: relative;
    display: flex;
    font-family: 'Open Sans', 'Noto Sans', sans-serif;
    font-size: 12px;
    line-height: 15px;
    color: #fff;
    text-shadow: 1px 1px 2px #000;
  }

  .shortcut-column {
    width: 76px;
  }

  .shortcut {
    height: 82px;
    padding-top: 7px;
    display: flex;
    flex-direction: column;
    align-items: center;
    white-space: nowrap;
  }

  .shortcut svg {
    flex: none;
    margin-bottom: 3px;
  }

  .tucked {
    align-items: flex-start;
  }

  .tucked span {
    width: 34px;
    min-height: 15px;
    text-align: center;
  }

  /* small window in the corner */
  .activator {
    position: absolute;
    top: 20px;
    right: 21px;
    width: 432px;
    height: 170px;
    border-radius: 6px;
    overflow: hidden;
    background: #313131;
    box-shadow: 0 0 12px rgba(0, 0, 0, 0.6);
  }

  .activator header {
    display: flex;
    gap: 7px;
    height: 39px;
    padding: 9px 13px 0 11px;
    background: #222;
    font-size: 11px;
    line-height: 16px;
    color: #fff;
  }

  .activator strong {
    color: #d19a1c;
    font-weight: 400;
  }

  .activator header span {
    flex: 1;
  }

  .activator i {
    width: 13px;
    height: 13px;
    margin-top: 4px;
    border-radius: 50%;
    background: #303030;
  }

  .activator-panel {
    height: 46px;
    margin: 18px 10px 15px 12px;
    background: #2b2b2b;
  }

  .activator-code {
    width: 60px;
    height: 27px;
    margin: 0 32px 0 auto;
    padding-right: 9px;
    background: #111;
    color: #d8a01f;
    font-size: 16px;
    line-height: 28px;
    text-align: right;
  }

  /* main window */
  .app-window {
    position: absolute;
    inset: 89px 82px 87px 172px;
    display: flex;
    flex-direction: column;
    border-radius: 8px;
    overflow: hidden;
    background: #fafafa;
    box-shadow: 0 0 0 1px #3f434a;
  }

  .titlebar {
    flex: none;
    height: 31px;
    display: flex;
    align-items: center;
    padding-left: 8px;
    background: #2b2b2b;
    color: #858585;
  }

  .titlebar-text {
    flex: 1;
    margin-left: 5px;
    font-family: 'Open Sans', 'Noto Sans', sans-serif;
    font-size: 12px;
  }

  .titlebar button {
    width: 46px;
    height: 31px;
    display: grid;
    place-items: center;
  }

  .titlebar button path {
    fill: none;
    stroke: #9a9a9a;
  }

  .app-body {
    flex: 1;
    min-height: 0;
    display: flex;
  }

  .scroll-y {
    flex: none;
    width: 4px;
    margin-bottom: 17px;
    border-radius: 0 0 2px 2px;
    background: #d2d2d2;
  }

  .scroll-x {
    flex: none;
    height: 17px;
    margin-right: 23px;
    border-radius: 4px;
    background: #dadada;
  }

  /* sidebar */
  .sidebar {
    position: relative;
    z-index: 1;
    flex: none;
    width: 260px;
    display: flex;
    flex-direction: column;
    background: #fff;
    box-shadow: 2px 8px 24px rgba(0, 0, 0, 0.28);
    clip-path: inset(0 -30px 0 0);
    color: #4f648f;
  }

  .brand {
    display: flex;
    align-items: center;
    padding: 12px 14px 0 16px;
  }

  .brand-name {
    flex: 1;
    margin-left: 2px;
    padding-top: 6px;
    background: linear-gradient(#05a4e8 40%, #0750a8 80%);
    background-clip: text;
    color: transparent;
    font-family: Inter, sans-serif;
    font-size: 21px;
    font-weight: 900;
    line-height: 26px;
    white-space: nowrap;
  }

  .round {
    flex: none;
    width: 33px;
    height: 33px;
    display: grid;
    place-items: center;
    border-radius: 50%;
    background: #e2e8f0;
    color: #0f172a;
  }

  .round.burger {
    width: 32px;
    height: 32px;
  }

  .round.dim {
    color: #9ca3b5;
  }

  .menu {
    display: flex;
    flex-direction: column;
    gap: 6px;
    padding: 24px 8px 0;
  }

  .menu-item {
    display: flex;
    align-items: center;
    gap: 8px;
    height: 36px;
    padding: 0 13px 0 10px;
    border-radius: 8px;
    font-family: Inter, sans-serif;
    font-size: 13px;
    font-weight: 600;
    text-align: left;
  }

  .menu-item span {
    flex: 1;
    padding-bottom: 2px;
  }

  .menu-item.active {
    background: #dce7f7;
    color: #2563eb;
  }

  .sidebar-foot {
    margin-top: auto;
    padding: 0 20px 3px;
  }

  .social {
    display: flex;
    align-items: center;
    gap: 20px;
    height: 50px;
    margin-bottom: 20px;
    border-radius: 25px;
    background: linear-gradient(90deg, #1368e6 20%, #659ff0 80%);
  }

  .social a,
  .social svg {
    display: block;
  }

  .social .support {
    width: 50px;
    height: 50px;
    display: grid;
    place-items: center;
    border: 1px solid #c5dafa;
    border-radius: 50%;
    background: #fff;
  }

  .info-card {
    position: relative;
    display: flex;
    flex-direction: column;
    gap: 12px;
    padding: 20px 25px 21px;
    border-radius: 6px;
    background: #fff;
    box-shadow: 0 2px 10px rgba(0, 0, 0, 0.25);
    font-size: 16px;
    line-height: 24px;
  }

  .round.collapse {
    position: absolute;
    top: -16px;
    left: calc(50% - 14px);
    width: 28px;
    height: 28px;
    background: #e5e7eb;
    color: #64748b;
  }

  .info-row {
    display: flex;
    gap: 12px;
  }

  .info-row > :global(svg) {
    margin-top: 2px;
  }

  .info-row div {
    display: flex;
    flex-direction: column;
    align-items: center;
  }

  .info-row b {
    font-weight: 600;
  }

  /* content */
  .content {
    flex: 1;
    min-width: 0;
    display: flex;
    flex-direction: column;
    overflow: hidden;
  }

  .topbar {
    flex: none;
    height: 63px;
    display: flex;
    align-items: center;
    gap: 13px;
    padding-left: 22px;
    border-bottom: 1px solid #ececec;
    background: #fff;
  }

  .proxy {
    display: flex;
    align-items: center;
    gap: 8px;
    margin-left: auto;
  }

  .proxy input {
    appearance: none;
    width: 38px;
    height: 20px;
    margin: 0;
    padding: 2px;
    border: 1px solid #dde1e5;
    border-radius: 10px;
    background: #e5e9ec;
  }

  .proxy input::before {
    content: '';
    display: block;
    width: 14px;
    height: 14px;
    border-radius: 50%;
    background: #fff;
  }

  .profile {
    display: flex;
    align-items: center;
    gap: 11px;
    width: 227px;
    height: 42px;
    padding-left: 6px;
    border-left: 2px solid #e5e7eb;
    font-size: 16px;
    line-height: 22px;
  }

  .profile p {
    padding-top: 2px;
  }

  .profile small {
    display: block;
    font-size: 12px;
    line-height: 20px;
    color: #868e96;
  }

  .avatar {
    display: grid;
    place-items: center;
    width: 38px;
    height: 38px;
    border-radius: 50%;
    background: #f1f1f2;
    color: #868e96;
  }

  .page {
    flex: 1;
    display: flex;
    flex-direction: column;
    min-height: 0;
    padding: 31px 0 15px 26px;
  }

  .page-head {
    display: flex;
    gap: 8px;
    margin-bottom: 20px;
    padding-right: 26px;
  }

  h1 {
    flex: 1;
    font-size: 24px;
    font-weight: 400;
    line-height: 24px;
    color: #404040;
  }

  .btn {
    display: flex;
    align-items: center;
    gap: 8px;
    height: 38px;
    padding: 0 15px;
    border-radius: 8px;
    white-space: nowrap;
  }

  .btn.primary {
    background: #1d4ed8;
    color: #fff;
    font-weight: 500;
  }

  .btn.outline {
    border: 1px solid #d1d5db;
    border-radius: 16px;
    background: #fff;
  }

  .btn.small {
    height: 30px;
    padding: 0 11px;
    font-size: 12px;
  }

  .panels {
    flex: 1;
    display: flex;
    gap: 12px;
    min-height: 0;
  }

  .left {
    flex: none;
    width: 370px;
    display: flex;
    flex-direction: column;
    gap: 16px;
  }

  .card {
    border-radius: 10px;
    background: #fff;
    box-shadow: 0 6px 18px rgba(0, 0, 0, 0.17);
  }

  .stats {
    display: flex;
    gap: 54px;
    padding: 20px 20px 18px;
  }

  .stat {
    display: flex;
    flex-direction: column;
    align-items: center;
    gap: 6px;
    font-family: Inter, sans-serif;
    font-weight: 600;
  }

  .stat span {
    padding: 0 4px;
    border-radius: 4px;
    font-size: 12px;
    line-height: 20px;
  }

  .stat b {
    font-size: 22px;
    font-weight: 600;
    line-height: 24px;
  }

  .blue {
    color: #3b82f6;
  }

  .green {
    color: #0da750;
  }

  .red {
    color: #ef4444;
  }

  .stat.blue span {
    background: #e0f0ff;
  }

  .stat.green span {
    background: #d8fdd4;
  }

  .stat.red span {
    background: #fee0e0;
  }

  .category {
    flex: 1;
    padding: 10px;
  }

  h2 {
    margin-bottom: 20px;
    font-family: Inter, sans-serif;
    font-size: 15px;
    font-weight: 600;
    line-height: 24px;
  }

  .category-form {
    display: flex;
    gap: 12px;
    margin-bottom: 30px;
  }

  .category-form input,
  .toolbar input {
    flex: 1;
    min-width: 0;
    padding: 0 16px;
    border: 1px solid #dfe5ee;
    border-radius: 6px;
    background: #fff;
    box-shadow: 0 1px 2px rgba(0, 0, 0, 0.06);
  }

  input::placeholder {
    color: #a6acbc;
  }

  .all {
    display: flex;
    align-items: center;
    gap: 8px;
    padding-left: 2px;
    color: #b5bac0;
  }

  .all input,
  .check input {
    appearance: none;
    width: 20px;
    height: 20px;
    margin: 0;
    border: 1px solid #cbd5e1;
    border-radius: 4px;
    background: #fff;
  }

  .all input {
    border-color: #dee2e6;
    background: #e9ecef;
  }

  .accounts {
    flex: 1;
    min-width: 0;
    display: flex;
    flex-direction: column;
    padding: 20px 2px 20px 20px;
    border-radius: 10px 0 0 10px;
  }

  .toolbar {
    display: flex;
    align-items: center;
    gap: 8px;
    margin-bottom: 8px;
  }

  .toolbar input {
    flex: none;
    width: 283px;
    height: 38px;
  }

  .filter {
    display: grid;
    place-items: center;
    width: 32px;
    height: 30px;
    border-radius: 6px;
    background: #3b82f6;
    color: #fff;
  }

  .counters {
    display: flex;
    gap: 20px;
    font-family: Inter, sans-serif;
    font-size: 13px;
    font-weight: 600;
  }

  .counters b {
    margin-left: 5px;
    font-weight: 600;
  }

  .actions {
    display: flex;
    gap: 8px;
    margin-bottom: 20px;
  }

  .actions .btn {
    height: 40px;
    padding: 0 16px 0 15px;
  }

  .table-box {
    flex: 1;
    display: flex;
    flex-direction: column;
    overflow: hidden;
    border: 2px solid #e2e4e7;
    border-radius: 12px;
  }

  table {
    width: 100%;
    table-layout: fixed;
    border-collapse: collapse;
    background: #f9f9f9;
  }

  th {
    height: 35px;
    padding: 0 8px;
    border-left: 1px solid #e5e7eb;
    border-bottom: 1px solid #e5e7eb;
    font-family: Inter, sans-serif;
    font-size: 13px;
    font-weight: 600;
    text-align: left;
  }

  th.check {
    width: 34px;
    border-left: 0;
    box-shadow: 2px 0 4px rgba(0, 0, 0, 0.08);
  }

  .check input {
    display: block;
  }

  .empty {
    flex: 1;
    display: grid;
    place-items: center;
    padding-bottom: 38px;
  }

  .table-scroll {
    width: 30%;
    height: 7px;
    margin-bottom: 2px;
    border-radius: 3px;
    background: #d9d9d9;
  }

  footer {
    display: flex;
    align-items: center;
    justify-content: space-between;
    height: 51px;
    padding: 0 9px 0 8px;
    border-top: 1px solid #e5e7eb;
    font-weight: 500;
  }

  footer input {
    width: 70px;
    height: 30px;
    border: 1px solid #cbd5e1;
    border-radius: 5px;
    text-align: center;
    font-family: 'Open Sans', 'Noto Sans', sans-serif;
    font-size: 13px;
    font-weight: 400;
  }

  .watermark {
    position: absolute;
    right: 84px;
    bottom: 51px;
    font-family: 'Open Sans', 'Noto Sans', sans-serif;
    font-size: 14px;
    line-height: 20px;
    color: #777c85;
  }

  .watermark p {
    font-size: 19px;
    line-height: 26px;
  }

  .taskbar {
    position: absolute;
    inset: auto 0 0;
    height: 2px;
    background: #222;
  }
</style>
